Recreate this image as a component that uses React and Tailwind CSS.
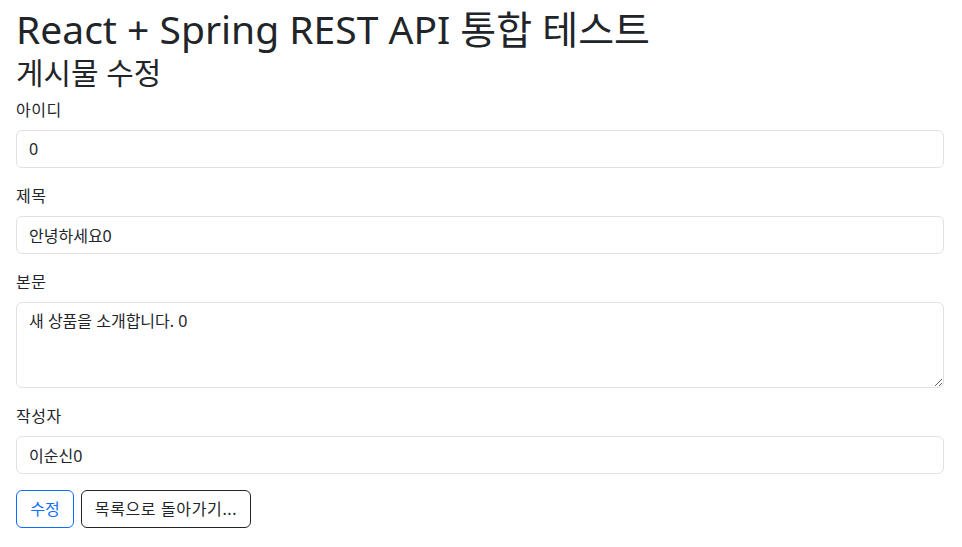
import React from 'react';

const fontStack = { fontFamily: '"Noto Sans", "Noto Sans CJK KR", sans-serif' };

function Field({ label, children }) {
  return (
    <div className="mb-4">
      <label className="block text-[16px] leading-6 mb-2 tracking-[0.03em]">{label}</label>
      {children}
    </div>
  );
}

const inputCls =
  'block w-full h-[38px] px-3 py-1.5 text-[16px] leading-6 text-[#212529] bg-white border border-[#dee2e6] rounded-md outline-none';

function App() {
  return (
    <div className="min-h-screen bg-white text-[#212529] pl-4 pr-[18px]" style={fontStack}>
      {/* Page title */}
      <h1 className="text-[39px] leading-[50px] pt-1 mb-px font-normal whitespace-nowrap">
        React + Spring REST API 통합 테스트
      </h1>
      <h2 className="text-[29.9px] leading-[1.2] font-normal mb-[7px]">게시물 수정</h2>

      <form>
        <Field label="아이디">
          <input className={inputCls} defaultValue="0" />
        </Field>
        <Field label="제목">
          <input className={inputCls} defaultValue="안녕하세요0" />
        </Field>
        <Field label="본문">
          <textarea
            rows={3}
            className="block w-full h-[86px] px-3 py-1.5 text-[16px] leading-6 text-[#212529] bg-white border border-[#dee2e6] rounded-md outline-none"
            defaultValue="새 상품을 소개합니다. 0"
          />
        </Field>
        <Field label="작성자">
          <input className={inputCls} defaultValue="이순신0" />
        </Field>

        <div className="flex gap-[7px]">
          <button
            type="button"
            className="w-[58px] h-[38px] text-[16px] leading-6 text-[#0d6efd] border border-[#0d6efd] rounded-md bg-white"
          >
            수정
          </button>
          <button
            type="button"
            className="w-[170px] h-[38px] text-[16px] leading-6 tracking-[0.04em] text-[#212529] border border-[#212529] rounded-md bg-white"
          >
            목록으로 돌아가기...
          </button>
        </div>
      </form>
    </div>
  );
}

export default App;
